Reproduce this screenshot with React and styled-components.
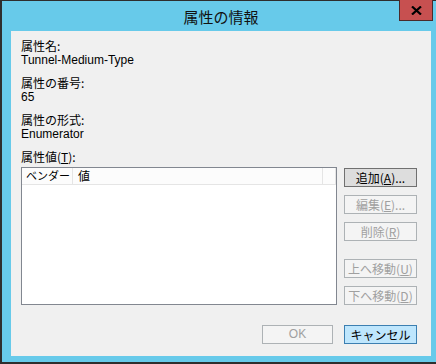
import React from 'react'
import styled, { createGlobalStyle } from 'styled-components'

const GlobalStyle = createGlobalStyle`
html, body {
  margin:0;
  padding:0;
  background:#67caea;
}
body {
  font-family:"Liberation Sans", "Noto Sans CJK JP", sans-serif;
  font-size:12px;
  color:#000;
}
`

const Frame = styled.div`
width:436px;
height:364px;
box-sizing:border-box;
background:#67caea;
border-left:2px solid #2e2e2e;
border-top:1px solid #2e2e2e;
border-bottom:2px solid #2e2e2e;
display:flex;
flex-direction:column;
`

const TitleBar = styled.div`
position:relative;
height:30px;
flex-shrink:0;
display:flex;
align-items:center;
justify-content:center;
padding-left:4px;
`

const TitleText = styled.div`
font-family:"Noto Sans CJK JP", sans-serif;
font-size:15px;
line-height:18px;
margin-top:1px;
color:#111;
`

const CloseButton = styled.div`
position:absolute;
top:-1px;
right:3px;
width:34px;
height:21px;
box-sizing:border-box;
background:#c75050;
border:1px solid #4a2a2a;
border-top:none;
display:flex;
align-items:center;
justify-content:center;
`

const Client = styled.div`
flex:1;
margin:0 5px 6px 9px;
background:#f0f0f0;
padding:7px 14px 0 10px;
display:flex;
flex-direction:column;
`

const Field = styled.div`
margin-bottom:9px;
`

const Label = styled.div`
font-family:"Noto Sans CJK JP", sans-serif;
line-height:16px;
white-space:nowrap;
`

const Value = styled.div`
line-height:12px;
white-space:nowrap;
`

const Body = styled.div`
display:flex;
gap:7px;
margin-top:2px;
`

const ListBox = styled.div`
width:316px;
height:138px;
box-sizing:border-box;
border:1px solid #828790;
background:#fff;
`

const Header = styled.div`
display:flex;
height:17px;
box-sizing:border-box;
background:#fcfcfc;
border-bottom:1px solid #e5e5e5;
`

const HeaderCell = styled.div`
width:${props => props.w}px;
flex:${props => props.w ? 'none' : '1'};
box-sizing:border-box;
border-right:1px solid #e5e5e5;
padding-left:${props => props.pad || 4}px;
font-family:"Noto Sans CJK JP", sans-serif;
line-height:15px;
font-size:${props => props.small ? 11 : 12}px;
white-space:nowrap;
overflow:hidden;
`

const ButtonColumn = styled.div`
display:flex;
flex-direction:column;
gap:8px;
padding-top:1px;
`

const Spacer = styled.div`
height:2px;
`

const Button = styled.div`
width:${props => props.w || 73}px;
height:19px;
box-sizing:border-box;
display:flex;
align-items:center;
justify-content:center;
font-family:"Noto Sans CJK JP", sans-serif;
font-size:12px;
line-height:13px;
white-space:nowrap;
border:1px solid ${props => props.variant === 'default' ? '#707070' : props.variant === 'focus' ? '#3c7fb1' : '#adb2b5'};
background:${props => props.variant === 'default' ? '#dddddd' : props.variant === 'focus' ? '#bee6fd' : '#f4f4f4'};
color:${props => props.variant ? '#000' : '#a0a0a0'};
u {
  text-decoration:underline;
  text-underline-offset:1px;
}
`

const Footer = styled.div`
display:flex;
justify-content:flex-end;
gap:11px;
margin-top:20px;
`

const Latin = styled.span`
font-family:"Liberation Sans", sans-serif;
`

const App = () => {
  return (
    <>
      <GlobalStyle />
      <Frame>
        <TitleBar>
          <TitleText>属性の情報</TitleText>
          <CloseButton>
            <svg width="11" height="9" viewBox="0 0 11 9">
              <path d="M1 0.5 L10 8.5 M10 0.5 L1 8.5" stroke="#000" strokeWidth="2.2" />
            </svg>
          </CloseButton>
        </TitleBar>
        <Client>
          <Field>
            <Label>属性名:</Label>
            <Value>Tunnel-Medium-Type</Value>
          </Field>
          <Field>
            <Label>属性の番号:</Label>
            <Value>65</Value>
          </Field>
          <Field>
            <Label>属性の形式:</Label>
            <Value>Enumerator</Value>
          </Field>
          <Label>属性値(<u>T</u>):</Label>
          <Body>
            <ListBox>
              <Header>
                <HeaderCell w={51} pad={4} small>ベンダー</HeaderCell>
                <HeaderCell pad={5}>値</HeaderCell>
                <HeaderCell w={13} />
              </Header>
            </ListBox>
            <ButtonColumn>
              <Button variant="default">追加(<u>A</u>)...</Button>
              <Button>編集(<u>E</u>)...</Button>
              <Button>削除(<u>R</u>)</Button>
              <Spacer />
              <Button>上へ移動(<u>U</u>)</Button>
              <Button>下へ移動(<u>D</u>)</Button>
            </ButtonColumn>
          </Body>
          <Footer>
            <Button w={71}><Latin>OK</Latin></Button>
            <Button variant="focus">キャンセル</Button>
          </Footer>
        </Client>
      </Frame>
    </>
  )
}

export default App
